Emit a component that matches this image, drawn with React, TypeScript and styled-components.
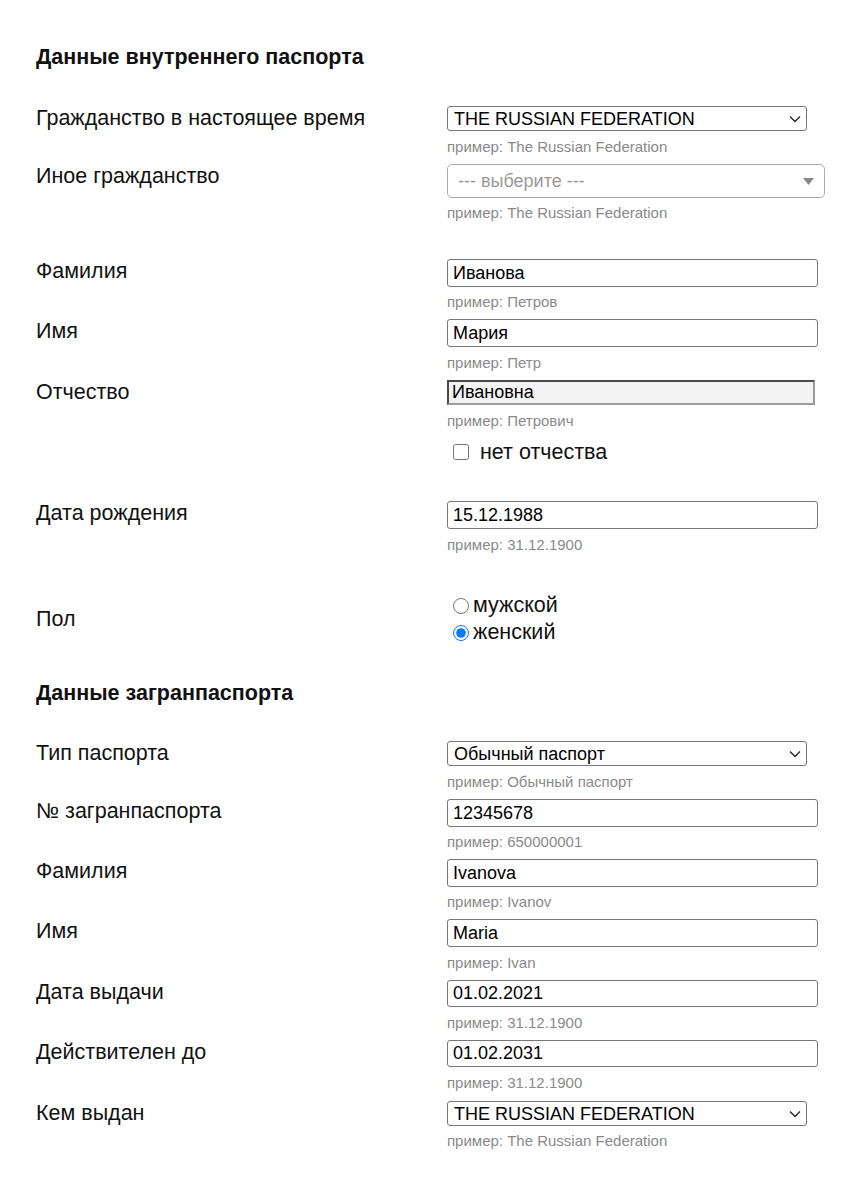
import React from "react";
import styled, { createGlobalStyle } from "styled-components";

const GlobalStyle = createGlobalStyle`
  html, body {
    margin: 0;
    padding: 0;
    background: #fff;
  }
  body {
    font-family: "Liberation Sans", Arial, sans-serif;
    color: #111;
  }
`;

const Page = styled.div`
  display: flex;
  flex-direction: column;
  padding: 45px 0 40px 36px;
  width: 852px;
  box-sizing: border-box;
`;

const Heading = styled.h2<{ $mt?: number }>`
  margin: ${(p) => p.$mt ?? 0}px 0 0 0;
  font-size: 21.5px;
  line-height: 24px;
  font-weight: 700;
`;

const Row = styled.div<{ $mt: number; $center?: boolean }>`
  display: flex;
  align-items: ${(p) => (p.$center ? "center" : "flex-start")};
  margin-top: ${(p) => p.$mt}px;
`;

const Label = styled.div`
  width: 411px;
  flex: none;
  font-size: 21.5px;
  line-height: 24px;
`;

const Field = styled.div`
  display: flex;
  flex-direction: column;
`;

const Hint = styled.div<{ $mt: number }>`
  margin-top: ${(p) => p.$mt}px;
  font-size: 15px;
  line-height: 16px;
  color: #8a8a8a;
`;

const TextInput = styled.input<{ $h: number }>`
  box-sizing: border-box;
  width: 371px;
  height: ${(p) => p.$h}px;
  margin: 0;
  padding: 0 5px;
  border: 1px solid #767676;
  border-radius: 3px;
  font-family: "Liberation Sans", Arial, sans-serif;
  font-size: 18px;
  color: #000;
  background: #fff;
  outline: none;
`;

const PatronymicInput = styled.input`
  box-sizing: border-box;
  width: 368px;
  height: 25px;
  margin: 0;
  padding: 0 3px;
  border-style: solid;
  border-width: 2px;
  border-color: #4a4a4a #9a9a9a #9a9a9a #4a4a4a;
  border-radius: 0;
  font-family: "Liberation Sans", Arial, sans-serif;
  font-size: 18px;
  color: #000;
  background: #f3f3f3;
  outline: none;
`;

const SelectWrap = styled.div`
  position: relative;
  width: 360px;
`;

const NativeSelect = styled.select`
  box-sizing: border-box;
  appearance: none;
  width: 360px;
  height: 25px;
  margin: 0;
  padding: 0 24px 0 6px;
  border: 1px solid #767676;
  border-radius: 3px;
  font-family: "Liberation Sans", Arial, sans-serif;
  font-size: 18px;
  color: #000;
  background: #fff;
  outline: none;
`;

const Chevron = styled.svg`
  position: absolute;
  right: 6px;
  top: 50%;
  transform: translateY(-50%);
  pointer-events: none;
`;

const FancySelect = styled.div`
  box-sizing: border-box;
  width: 378px;
  height: 34px;
  display: flex;
  align-items: center;
  justify-content: space-between;
  padding: 0 10px 0 10px;
  border: 1px solid #aaa;
  border-radius: 5px;
  font-size: 18px;
  color: #999;
  background: #fff;
`;

const CheckLine = styled.label`
  display: flex;
  align-items: center;
  margin-top: 11px;
  height: 24px;
  font-size: 21.5px;
`;

const CheckBox = styled.input`
  width: 16px;
  height: 16px;
  margin: 0 11px 0 6px;
  accent-color: #0a78ff;
`;

const RadioGroup = styled.div`
  display: flex;
  flex-direction: column;
`;

const RadioLine = styled.label`
  display: flex;
  align-items: center;
  height: 27px;
  font-size: 21.5px;
`;

const Radio = styled.input`
  width: 16px;
  height: 16px;
  margin: 0 4px 0 6px;
  accent-color: #0a78ff;
`;

const Select = ({ value }: { value: string }) => (
  <SelectWrap>
    <NativeSelect defaultValue={value}>
      <option>{value}</option>
    </NativeSelect>
    <Chevron width="12" height="8" viewBox="0 0 12 8">
      <path d="M1 1.5 L6 6.5 L11 1.5" fill="none" stroke="#222" strokeWidth="1.3" />
    </Chevron>
  </SelectWrap>
);

type Item = {
  label: string;
  value: string;
  hint: string;
  kind: "input" | "select";
  mt: number;
  h: number;
  hintMt: number;
};

const foreign: Item[] = [
  { label: "Тип паспорта", value: "Обычный паспорт", hint: "пример: Обычный паспорт", kind: "select", mt: 36, h: 25, hintMt: 8 },
  { label: "№ загранпаспорта", value: "12345678", hint: "пример: 650000001", kind: "input", mt: 9, h: 28, hintMt: 7 },
  { label: "Фамилия", value: "Ivanova", hint: "пример: Ivanov", kind: "input", mt: 9, h: 28, hintMt: 7 },
  { label: "Имя", value: "Maria", hint: "пример: Ivan", kind: "input", mt: 9, h: 28, hintMt: 8 },
  { label: "Дата выдачи", value: "01.02.2021", hint: "пример: 31.12.1900", kind: "input", mt: 9, h: 27, hintMt: 8 },
  { label: "Действителен до", value: "01.02.2031", hint: "пример: 31.12.1900", kind: "input", mt: 9, h: 27, hintMt: 8 },
  { label: "Кем выдан", value: "THE RUSSIAN FEDERATION", hint: "пример: The Russian Federation", kind: "select", mt: 10, h: 25, hintMt: 7 },
];

const FieldRow = ({ item }: { item: Item }) => (
  <Row $mt={item.mt}>
    <Label>{item.label}</Label>
    <Field>
      {item.kind === "select" ? (
        <Select value={item.value} />
      ) : (
        <TextInput $h={item.h} defaultValue={item.value} />
      )}
      <Hint $mt={item.hintMt}>{item.hint}</Hint>
    </Field>
  </Row>
);

export default function App() {
  return (
    <>
      <GlobalStyle />
      <Page>
        <Heading>Данные внутреннего паспорта</Heading>

        <Row $mt={37}>
          <Label>Гражданство в настоящее время</Label>
          <Field>
            <Select value="THE RUSSIAN FEDERATION" />
            <Hint $mt={8}>пример: The Russian Federation</Hint>
          </Field>
        </Row>

        <Row $mt={9}>
          <Label>Иное гражданство</Label>
          <Field>
            <FancySelect>
              <span>--- выберите ---</span>
              <svg width="11" height="7" viewBox="0 0 11 7">
                <path d="M0 0 H11 L5.5 7 Z" fill="#888" />
              </svg>
            </FancySelect>
            <Hint $mt={7}>пример: The Russian Federation</Hint>
          </Field>
        </Row>

        <FieldRow item={{ label: "Фамилия", value: "Иванова", hint: "пример: Петров", kind: "input", mt: 38, h: 28, hintMt: 7 }} />
        <FieldRow item={{ label: "Имя", value: "Мария", hint: "пример: Петр", kind: "input", mt: 9, h: 28, hintMt: 8 }} />

        <Row $mt={9}>
          <Label>Отчество</Label>
          <Field>
            <PatronymicInput defaultValue="Ивановна" />
            <Hint $mt={8}>пример: Петрович</Hint>
            <CheckLine>
              <CheckBox type="checkbox" />
              нет отчества
            </CheckLine>
          </Field>
        </Row>

        <FieldRow item={{ label: "Дата рождения", value: "15.12.1988", hint: "пример: 31.12.1900", kind: "input", mt: 37, h: 28, hintMt: 8 }} />

        <Row $mt={39} $center>
          <Label>Пол</Label>
          <RadioGroup>
            <RadioLine>
              <Radio type="radio" name="sex" />
              мужской
            </RadioLine>
            <RadioLine>
              <Radio type="radio" name="sex" defaultChecked />
              женский
            </RadioLine>
          </RadioGroup>
        </Row>

        <Heading $mt={35}>Данные загранпаспорта</Heading>

        {foreign.map((item, i) => (
          <FieldRow key={i} item={item} />
        ))}
      </Page>
    </>
  );
}
